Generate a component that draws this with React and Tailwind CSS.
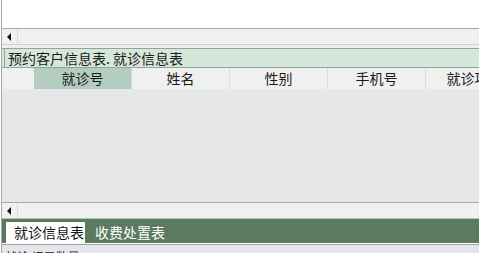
import React from "react";

const Arrow = () => (
  <div className="w-[16px] h-full flex items-center justify-center border-r border-[#dcdcdc]">
    <svg width="5" height="8" viewBox="0 0 5 8"><path d="M4 0 L0 4 L4 8 Z" fill="#111" /></svg>
  </div>
);

export default function App() {
  const cols = ["就诊号", "姓名", "性别", "手机号", "就诊项目"];
  return (
    <div
      className="w-[479px] h-[253px] overflow-hidden bg-white flex"
      style={{ fontFamily: '"Noto Sans CJK SC", "Noto Sans", sans-serif' }}
    >
      <div className="w-[1px] bg-white" />
      <div className="flex-1 flex flex-col border-l border-[#a8a8a8] min-w-0">
        <div className="h-[29px] shrink-0 bg-white border-b border-[#a8a8a8]" />
        <div className="h-[16px] shrink-0 bg-[#f0f0f0] flex border-b border-[#c8d2c8]">
          <Arrow />
        </div>
        <div className="h-[3px] shrink-0 bg-[#eef0ee]" />
        <div className="h-[20px] shrink-0 bg-[#d6e6da] border-t border-b border-[#8fa596] pl-[2px] flex">
          <div className="h-full flex items-center border-l border-[#8fa596] pl-[3px] text-[14px] leading-none text-[#1a1a1a] whitespace-nowrap">
            预约客户信息表. 就诊信息表
          </div>
        </div>
        <div className="h-[21px] shrink-0 bg-[#f0f0f0] flex text-[14px] text-[#1a1a1a] whitespace-nowrap overflow-hidden">
          <div className="w-[32px] shrink-0" />
          {cols.map((c, i) => (
            <div
              key={c}
              className={
                "w-[98px] shrink-0 flex items-center justify-center border-r border-[#dcdcdc] " +
                (i === 0 ? "bg-[#b3cec0]" : "")
              }
            >
              {c}
            </div>
          ))}
        </div>
        <div className="h-[114px] shrink-0 bg-[#e6e7e9] border-b border-[#a8a8a8]" />
        <div className="h-[16px] shrink-0 bg-[#f0f0f2] flex border-b border-[#b4c2b4]">
          <Arrow />
        </div>
        <div className="h-[24px] shrink-0 bg-[#5b7a5e] flex items-end pl-[4px] gap-[10px]">
          <div className="h-[21px] w-[79px] bg-white flex items-center pl-[8px] text-[14px] text-[#111] whitespace-nowrap">
            就诊信息表
          </div>
          <div className="h-[21px] flex items-center text-[14px] text-white whitespace-nowrap">
            收费处置表
          </div>
        </div>
        <div className="h-[1px] shrink-0 bg-white" />
        <div className="h-[1px] shrink-0 bg-[#9aa4ac]" />
        <div className="flex-1 bg-[#e4e6ea] overflow-hidden pl-[3px] pt-[6px] text-[12px] leading-none text-[#222] whitespace-nowrap">
          就诊 记录数量：0
        </div>
      </div>
    </div>
  );
}
